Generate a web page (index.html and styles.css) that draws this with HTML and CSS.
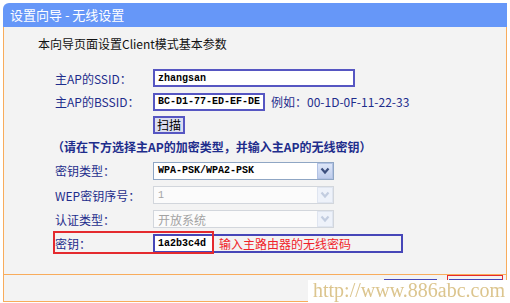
FILE: index.html
```html
<!DOCTYPE html>
<html lang="zh-CN">
<head>
<meta charset="UTF-8">
<meta name="viewport" content="width=device-width, initial-scale=1.0">
<link rel="stylesheet" href="styles.css">
</head>
<body>
<div class="wizard">
  <div class="title-bar">设置向导 - 无线设置</div>
  <div class="panel">
    <div class="content">
      <h1>本向导页面设置Client模式基本参数</h1>

      <div class="row r1">
        <label>主AP的SSID：</label>
        <input class="text-box ssid" type="text" value="zhangsan" readonly>
      </div>
      <div class="row r2">
        <label>主AP的BSSID：</label>
        <input class="text-box bssid" type="text" value="BC-D1-77-ED-EF-DE" readonly>
        <span class="example">例如：00-1D-0F-11-22-33</span>
      </div>
      <div class="row r3">
        <label></label>
        <button class="scan-btn">扫描</button>
      </div>
      <div class="note">（请在下方选择主AP的加密类型，并输入主AP的无线密钥）</div>
      <div class="row s1">
        <label>密钥类型：</label>
        <div class="select">
          <span class="mono">WPA-PSK/WPA2-PSK</span>
          <span class="arrow"><svg width="10" height="8" viewBox="0 0 10 8"><polyline points="1.5,1.5 5,5.5 8.5,1.5" fill="none" stroke="#3c4f7e" stroke-width="2.2"/></svg></span>
        </div>
      </div>
      <div class="row s2">
        <label>WEP密钥序号：</label>
        <div class="select disabled">
          <span class="mono">1</span>
          <span class="arrow"><svg width="10" height="8" viewBox="0 0 10 8"><polyline points="1.5,1.5 5,5.5 8.5,1.5" fill="none" stroke="#c3cde0" stroke-width="2.2"/></svg></span>
        </div>
      </div>
      <div class="row s3">
        <label>认证类型：</label>
        <div class="select disabled">
          <span>开放系统</span>
          <span class="arrow"><svg width="10" height="8" viewBox="0 0 10 8"><polyline points="1.5,1.5 5,5.5 8.5,1.5" fill="none" stroke="#c3cde0" stroke-width="2.2"/></svg></span>
        </div>
      </div>
      <div class="row key-row">
        <label>密钥：</label>
        <div class="key-field">
          <input class="text-box key" type="text" value="1a2b3c4d" readonly>
          <span class="hint">输入主路由器的无线密码</span>
        </div>
        <div class="mark-red key-mark"></div>
      </div>
    </div>
    <div class="footer">
      <button class="foot-btn"></button>
      <button class="foot-btn"></button>
      <div class="mark-red next-mark"></div>
    </div>
  </div>
</div>
<div class="watermark">http://www.886abc.com</div>
</body>
</html>
```
FILE: styles.css
```css
* {
	margin: 0;
	padding: 0;
	box-sizing: border-box;
}

body {
	margin: 3px;
	background: #fff;
	font-family: "Noto Sans CJK SC", sans-serif;
	font-size: 12px;
}

.wizard {
	width: 504px;
}

.title-bar {
	height: 24px;
	background: #6697f8;
	color: #fff;
	font-size: 13px;
	line-height: 24px;
	padding-left: 7px;
	border-radius: 6px 0 0 0;
}

.panel {
	border: 1px solid #f8ac5c;
	border-top: none;
	background: #f3f3f3;
}

.content {
	padding: 8px 0 19px 51px;
}

.content h1 {
	font-size: 12px;
	font-weight: normal;
	line-height: 18px;
	margin: 0 0 13px -17px;
	color: #111;
}

.row {
	display: flex;
	align-items: center;
	height: 24px;
	color: #1e2d8c;
}
.r2, .r3 { height: 23px; }
.s1 { height: 25px; }

.row label {
	width: 98px;
	flex: none;
}

.mono {
	font-family: "Liberation Mono", monospace;
	font-size: 10px;
	font-weight: bold;
	color: #000;
}

.text-box {
	height: 18px;
	border: 2px solid #5656c2;
	background: #fff;
	padding: 0 3px;
	font-family: "Liberation Mono", monospace;
	font-size: 10px;
	font-weight: bold;
	color: #000;
	outline: none;
}
.ssid { width: 202px; }
.bssid { width: 112px; }

.example {
	margin-left: 6px;
}

.scan-btn {
	width: 32px;
	height: 18px;
	border: 2px solid #5656c2;
	background: #dcdef0;
	font-family: "Noto Sans CJK SC", sans-serif;
	font-size: 12px;
	line-height: 13px;
	color: #000;
}

.note {
	height: 22px;
	line-height: 22px;
	margin-left: -3px;
	font-weight: bold;
	color: #1e2d8c;
}

.select {
	width: 181px;
	height: 18px;
	border: 1px solid #8fa6c4;
	background: #fff;
	display: flex;
	align-items: center;
	justify-content: space-between;
	padding-left: 4px;
}
.select .arrow {
	width: 16px;
	height: 16px;
	background: linear-gradient(#dde6f8, #bfcdec);
	border: 1px solid #b2c2e4;
	display: flex;
	align-items: center;
	justify-content: center;
}
.select.disabled {
	border-color: #d2d6dc;
	background: #fbfbfb;
	color: #a3a3a3;
}
.select.disabled .mono {
	color: #a3a3a3;
	font-weight: normal;
}
.select.disabled .arrow {
	background: #eef2fa;
	border-color: #dfe5f0;
}

.key-row {
	position: relative;
}
.key-field {
	display: flex;
	align-items: center;
	width: 250px;
	height: 19px;
	border: 2px solid #4646b8;
}
.key-field .key {
	width: 58px;
	height: 15px;
	border: none;
}
.hint {
	margin-left: 6px;
	color: #f0232a;
}

.mark-red {
	position: absolute;
	border: 2px solid #e42a2e;
}
.key-mark {
	left: -2px;
	top: 0;
	width: 161px;
	height: 23px;
}

.footer {
	position: relative;
	height: 27px;
	border-top: 1px solid #f8ac5c;
	display: flex;
	justify-content: flex-end;
	gap: 12px;
	padding: 4px 4px 0 0;
}
.foot-btn {
	width: 53px;
	height: 22px;
	border: 2px solid #4646b8;
	background: #e4e4ef;
}
.next-mark {
	right: 3px;
	top: 0;
	width: 56px;
	height: 30px;
	border-width: 1px;
}

.watermark {
	position: fixed;
	left: 308px;
	top: 280px;
	right: 0;
	bottom: 0;
	background: #fff;
	padding-left: 5px;
	font-family: "Liberation Serif", serif;
	font-size: 20px;
	line-height: 21px;
	color: #dcc58e;
}
```
